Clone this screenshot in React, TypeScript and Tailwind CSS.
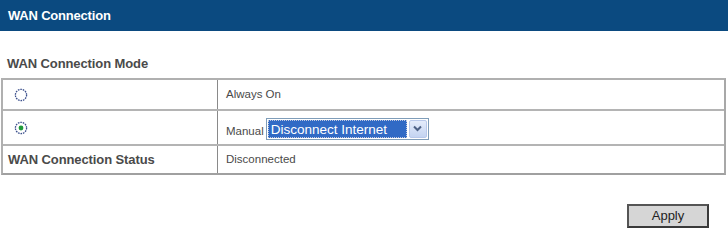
import React from "react";

function Radio({ checked }: { checked?: boolean }) {
  return (
    <svg width="14" height="14" viewBox="0 0 14 14">
      <circle cx="7" cy="7" r="5.6" fill="#fff" stroke="#3b4f8c" strokeWidth="1.3" strokeDasharray="1.6 0.9" />
      {checked && <circle cx="7" cy="7" r="2.4" fill="#1f9a3a" />}
    </svg>
  );
}

export default function App() {
  return (
    <div className="w-[728px] h-[230px] bg-white text-[#4a4a4a] overflow-hidden" style={{ fontFamily: '"Liberation Sans", Arial, sans-serif' }}>
      <div className="h-[31px] bg-[#0b4a80] flex items-center pl-[8px]">
        <span className="text-white font-bold text-[13px] tracking-[-0.2px]">WAN Connection</span>
      </div>
      <div className="pl-[7px] pt-[23px] h-[47px] text-[13px] font-bold text-[#4a4a4a] tracking-[-0.1px]">WAN Connection Mode</div>
      <div className="ml-[1px] w-[725px] border-2 border-[#b0b0b0] border-r-[#a8a8a8] border-b-[#a0a0a0]">
        <div className="grid grid-cols-[215px_1fr] h-[31px] border-b-2 border-[#b4b4b4]">
          <div className="border-r border-[#8a8a8a] flex items-center pl-[11px]">
            <Radio />
          </div>
          <div className="flex items-center pl-[8px] text-[11.5px]">Always On</div>
        </div>
        <div className="grid grid-cols-[215px_1fr] h-[35px] border-b-2 border-[#b4b4b4]">
          <div className="border-r border-[#8a8a8a] flex items-center pl-[11px]">
            <Radio checked />
          </div>
          <div className="flex items-center pl-[8px] text-[11.5px]">
            <span className="mt-[8px]">Manual</span>
            <div className="ml-[2px] mt-[2px] w-[163px] h-[22px] border border-[#7f9db9] bg-white flex items-center p-[1px]">
              <div className="flex-1 h-full bg-[#316ac5] text-white text-[13.5px] leading-[18px] pl-[2px] border border-dotted border-[#c0c8e0]">Disconnect Internet</div>
              <div className="w-[18px] h-full ml-[2px] bg-gradient-to-b from-[#e4ecfb] to-[#c4d4f1] border border-[#b8c8ea] rounded-[2px] flex items-center justify-center">
                <svg width="9" height="7" viewBox="0 0 9 7">
                  <path d="M1 1.5 L4.5 5 L8 1.5" fill="none" stroke="#4d6185" strokeWidth="2" />
                </svg>
              </div>
            </div>
          </div>
        </div>
        <div className="grid grid-cols-[215px_1fr] h-[27px]">
          <div className="border-r border-[#8a8a8a] flex items-center pl-[5px] text-[13px] font-bold text-[#4a4a4a] tracking-[-0.1px]">WAN Connection Status</div>
          <div className="flex items-center pl-[8px] text-[11.5px]">Disconnected</div>
        </div>
      </div>
      <div className="flex justify-end pr-[19px] pt-[29px]">
        <button className="w-[82px] h-[24px] bg-[#d6d6d6] border-2 border-[#3a3a3a] border-t-[#555] border-l-[#555] text-[13px] text-[#222] flex items-center justify-center">Apply</button>
      </div>
    </div>
  );
}
